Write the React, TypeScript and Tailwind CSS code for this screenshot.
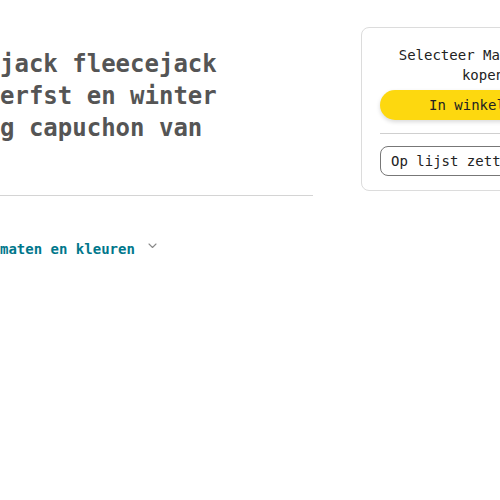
// Product page, right-hand buy box plus title column (scrolled view).

const MONO = "font-['DejaVu_Sans_Mono','Liberation_Mono',monospace]";

function Chevron() {
  return (
    <svg width="9" height="6" viewBox="0 0 9 6" fill="none" className="mt-[4px] ml-[13px] shrink-0">
      <path d="M1 1l3.5 3.5L8 1" stroke="#8a8a8a" strokeWidth="1.1" strokeLinecap="round" strokeLinejoin="round" />
    </svg>
  );
}

function TitleColumn() {
  return (
    <div className="w-[313px] shrink-0">
      <h1 className="mt-[21px] whitespace-nowrap text-[24px] leading-8 font-bold text-[#555]">
        <span className="block">jack fleecejack</span>
        <span className="block">erfst en winter</span>
        <span className="block">g capuchon van</span>
      </h1>
      <div className="mt-[51px] border-t border-[#d4d4d4]" />
      <a href="#" className="mt-[43px] flex items-start whitespace-nowrap">
        <span className="text-[14px] leading-5 font-bold text-[#00778b]">maten en kleuren</span>
        <Chevron />
      </a>
    </div>
  );
}

function BuyBox() {
  return (
    <div className="ml-[48px] w-[244px] shrink-0 rounded-lg border border-[#dcdcdc] bg-white px-[18px] pt-[17px] pb-[14px]">
      <p className="text-center text-[14px] leading-5 text-[#222]">
        Selecteer Maat om te kopen
      </p>
      <button
        type="button"
        className="mt-[5px] flex h-[30px] w-full items-center justify-center rounded-full bg-[#fdd80f] pl-[10px] text-[14px] text-[#222] shadow-[0_2px_4px_rgba(0,0,0,0.15)]"
      >
        In winkelwagen
      </button>
      <div className="mt-[13px] border-t border-[#cfcfcf]" />
      <button
        type="button"
        className="mt-[12px] flex h-[30px] w-full items-center rounded-lg border border-[#777] px-[10px] text-[14px] text-[#222]"
      >
        Op lijst zetten
      </button>
    </div>
  );
}

export default function App() {
  return (
    <div className={`h-[500px] w-[500px] overflow-hidden bg-white ${MONO}`}>
      <div className="flex items-start pt-[27px]">
        <TitleColumn />
        <BuyBox />
      </div>
    </div>
  );
}
